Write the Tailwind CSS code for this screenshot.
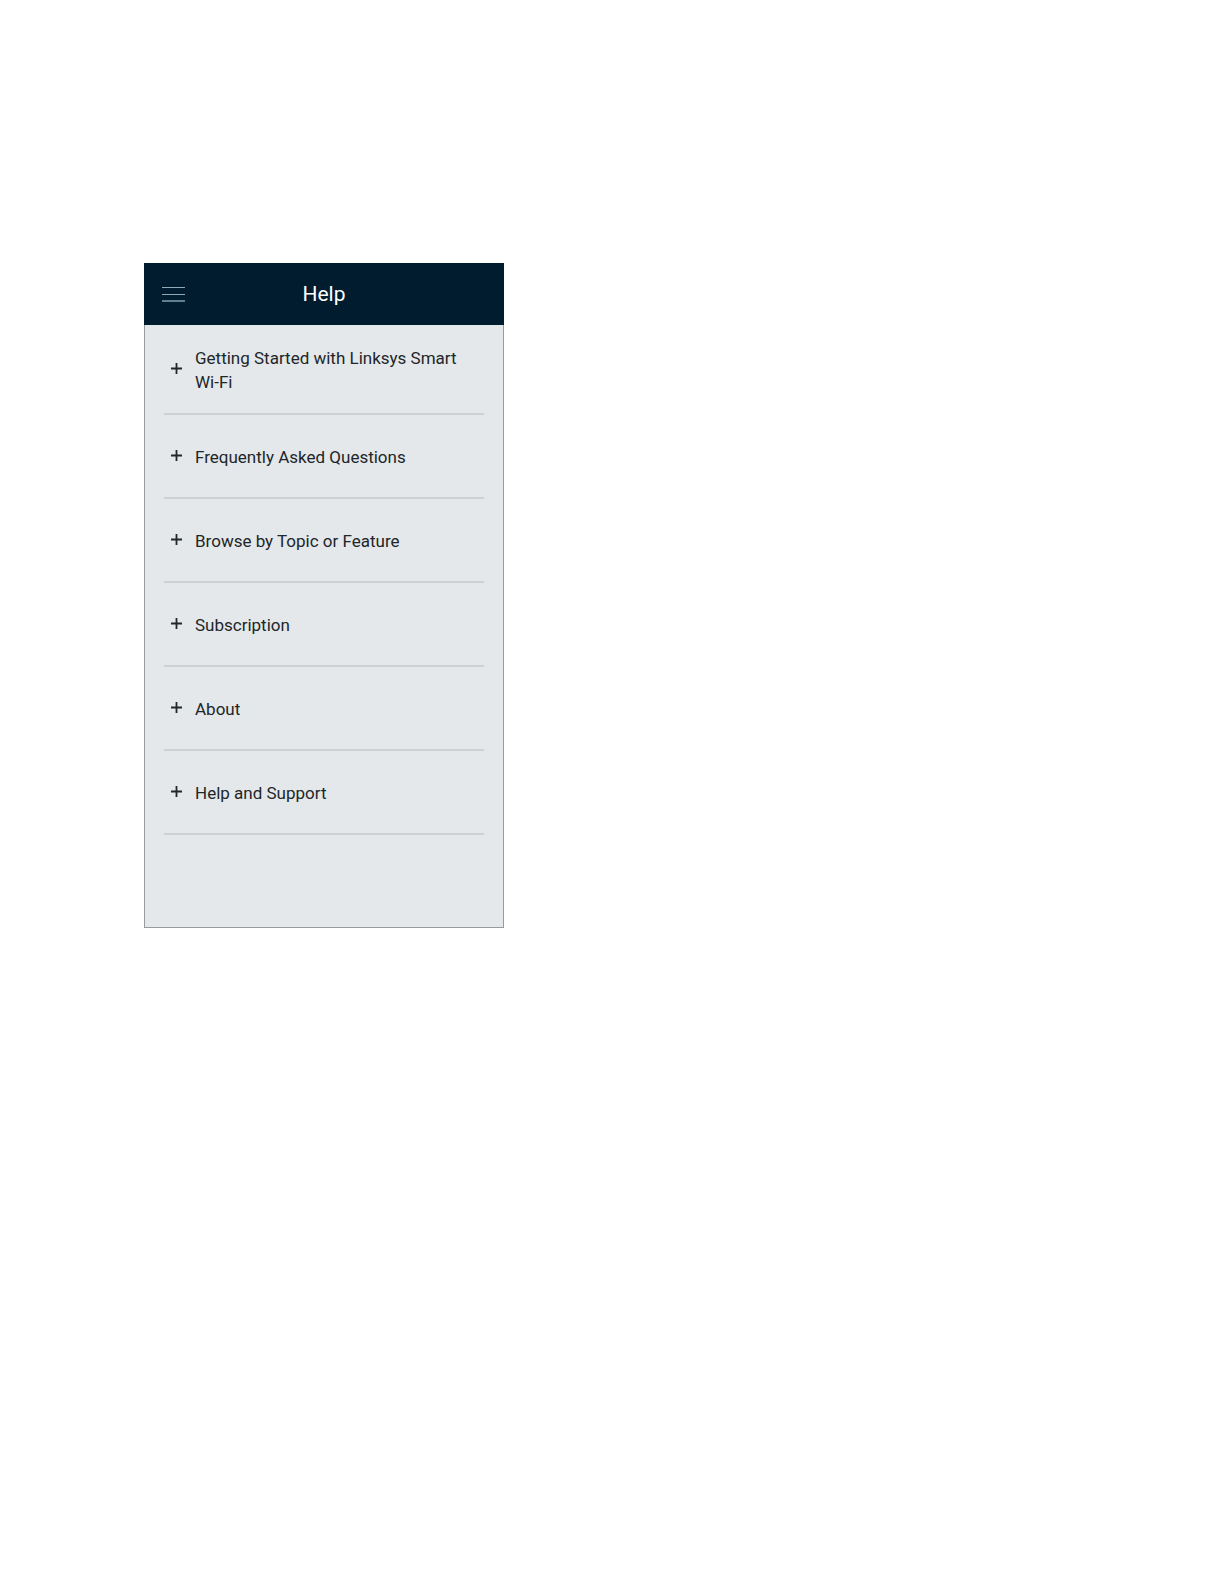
<!DOCTYPE html>
<html lang="en">
<head>
<meta charset="utf-8">
<meta name="viewport" content="width=device-width, initial-scale=1">
<title>Help</title>
<script src="https://cdn.jsdelivr.net/npm/@tailwindcss/browser@4"></script>
</head>
<body class="min-h-screen bg-white font-[Roboto,sans-serif] text-[#212628]">
<svg class="hidden" aria-hidden="true">
  <symbol id="plus" viewBox="0 0 11 11"><path d="M5.5 0v11M0 5.5h11" fill="none" stroke="currentColor" stroke-width="1.8"/></symbol>
</svg>
<main class="px-36 pt-[263px] pb-36">
  <section class="w-full max-w-[360px] bg-[#e4e8eb]">
    <header class="grid h-[62px] grid-cols-[1fr_auto_1fr] items-center bg-[#001c2e] px-[18px]">
      <button type="button" aria-label="Menu" class="justify-self-start text-[#8fa9b5]">
        <svg class="block h-4 w-[23px]" viewBox="0 0 23 16"><path d="M0 1.5h23M0 8.5h23" stroke="currentColor"/><path d="M0 15h23" stroke="#607f8c" stroke-width="2"/></svg>
      </button>
      <h1 class="text-[21px] leading-7 text-white">Help</h1>
    </header>
    <div class="border border-t-0 border-[#979b9e] px-[19px] pb-[92px]">
      <ul class="text-[17px] leading-6">
        <li class="border-b-2 border-[#cdd1d4]"><button type="button" class="flex min-h-[88px] w-full items-center gap-[13px] pr-2 pl-[7px] text-left"><svg class="mb-px size-[11px] shrink-0"><use href="#plus"/></svg><span class="pt-px">Getting Started with Linksys Smart Wi-Fi</span></button></li>
        <li class="border-b-2 border-[#cdd1d4]"><button type="button" class="flex min-h-[82px] w-full items-center gap-[13px] pr-2 pl-[7px] text-left"><svg class="mb-px size-[11px] shrink-0"><use href="#plus"/></svg><span class="pt-px">Frequently Asked Questions</span></button></li>
        <li class="border-b-2 border-[#cdd1d4]"><button type="button" class="flex min-h-[82px] w-full items-center gap-[13px] pr-2 pl-[7px] text-left"><svg class="mb-px size-[11px] shrink-0"><use href="#plus"/></svg><span class="pt-px">Browse by Topic or Feature</span></button></li>
        <li class="border-b-2 border-[#cdd1d4]"><button type="button" class="flex min-h-[82px] w-full items-center gap-[13px] pr-2 pl-[7px] text-left"><svg class="mb-px size-[11px] shrink-0"><use href="#plus"/></svg><span class="pt-px">Subscription</span></button></li>
        <li class="border-b-2 border-[#cdd1d4]"><button type="button" class="flex min-h-[82px] w-full items-center gap-[13px] pr-2 pl-[7px] text-left"><svg class="mb-px size-[11px] shrink-0"><use href="#plus"/></svg><span class="pt-px">About</span></button></li>
        <li class="border-b-2 border-[#cdd1d4]"><button type="button" class="flex min-h-[82px] w-full items-center gap-[13px] pr-2 pl-[7px] text-left"><svg class="mb-px size-[11px] shrink-0"><use href="#plus"/></svg><span class="pt-px">Help and Support</span></button></li>
      </ul>
    </div>
  </section>
</main>
</body>
</html>
